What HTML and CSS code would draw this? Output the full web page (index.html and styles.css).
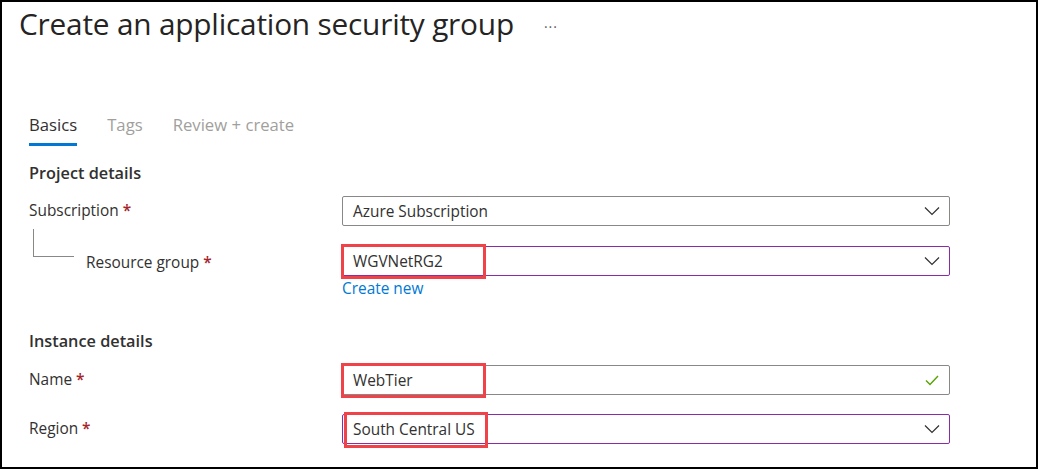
FILE: index.html
```html
<!DOCTYPE html>
<html>
<head>
<meta charset="utf-8">
<link rel="stylesheet" href="styles.css">
</head>
<body>
<div class="frame">
  <div class="header">
    <h1 class="title">Create an application security group</h1>
    <span class="more">···</span>
  </div>
  <div class="tabs">
    <div class="tab active">Basics</div>
    <div class="tab">Tags</div>
    <div class="tab">Review + create</div>
  </div>
  <div class="section-title">Project details</div>
  <div class="row row-sub">
    <div class="label">Subscription <span class="req">*</span></div>
    <div class="control">
      <div class="select">
        <span class="value">Azure Subscription</span>
        <svg class="chev" width="16" height="10" viewBox="0 0 16 10"><path d="M1 1.5 L8 8.5 L15 1.5" fill="none" stroke="#323130" stroke-width="1.2"/></svg>
      </div>
    </div>
  </div>
  <div class="row row-rg">
    <div class="label indent"><span class="tree"></span>Resource group <span class="req">*</span></div>
    <div class="control">
      <div class="select focus">
        <span class="value">WGVNetRG2</span>
        <svg class="chev" width="16" height="10" viewBox="0 0 16 10"><path d="M1 1.5 L8 8.5 L15 1.5" fill="none" stroke="#323130" stroke-width="1.2"/></svg>
        <span class="hl hl-rg"></span>
      </div>
      <a class="link">Create new</a>
    </div>
  </div>
  <div class="section-title second">Instance details</div>
  <div class="row row-name">
    <div class="label">Name <span class="req">*</span></div>
    <div class="control">
      <div class="select">
        <span class="value">WebTier</span>
        <svg class="check" width="14" height="11" viewBox="0 0 14 11"><path d="M1 5.5 L5 9.5 L13 1" fill="none" stroke="#57a300" stroke-width="1.4"/></svg>
        <span class="hl hl-name"></span>
      </div>
    </div>
  </div>
  <div class="row row-region">
    <div class="label">Region <span class="req">*</span></div>
    <div class="control">
      <div class="select focus">
        <span class="value">South Central US</span>
        <svg class="chev" width="16" height="10" viewBox="0 0 16 10"><path d="M1 1.5 L8 8.5 L15 1.5" fill="none" stroke="#323130" stroke-width="1.2"/></svg>
        <span class="hl hl-region"></span>
      </div>
    </div>
  </div>
</div>
</body>
</html>
```
FILE: styles.css
```css
html, body {
  margin: 0;
  padding: 0;
  background: #fff;
}
body {
  font-family: "Open Sans", "Noto Sans", sans-serif;
  color: #323130;
}
.frame {
  box-sizing: border-box;
  width: 1038px;
  height: 469px;
  border: 2px solid #000;
  padding: 0 0 0 27px;
}
.header {
  display: flex;
  align-items: center;
  margin-left: -10px;
  height: 42px;
}
.title {
  margin: 0;
  font-size: 29.8px;
  font-weight: 400;
  letter-spacing: -0.2px;
  color: #252423;
}
.more {
  margin-left: 30px;
  margin-top: 6px;
  font-size: 14px;
  color: #605e5c;
  letter-spacing: 1px;
}
.tabs {
  display: flex;
  gap: 30px;
  margin-top: 69px;
}
.tab {
  font-size: 16.7px;
  color: #a19f9d;
  padding-bottom: 7px;
  border-bottom: 3px solid transparent;
}
.tab.active {
  color: #323130;
  border-bottom-color: #0078d4;
}
.section-title {
  font-size: 16.3px;
  font-weight: 600;
  margin-top: 16px;
  color: #323130;
}
.section-title.second {
  margin-top: 31px;
}
.row {
  display: grid;
  grid-template-columns: 313px 608px;
  align-items: start;
}
.row-sub { margin-top: 12px; }
.row-rg { margin-top: 20px; }
.row-name { margin-top: 13px; }
.row-region { margin-top: 19px; }
.label {
  font-size: 15.4px;
  line-height: 30px;
  color: #323130;
}
.req {
  color: #a4262c;
  font-weight: 600;
}
.label.indent {
  position: relative;
  padding-left: 57px;
  top: 2px;
}
.tree {
  position: absolute;
  left: 4px;
  top: -19px;
  width: 40px;
  height: 27px;
  border-left: 1px solid #8a8886;
  border-bottom: 1px solid #8a8886;
}
.select {
  position: relative;
  box-sizing: border-box;
  height: 30px;
  border: 1px solid #8a8886;
  border-radius: 2px;
  display: flex;
  align-items: center;
  justify-content: space-between;
  padding: 0 9px 0 10px;
}
.select.focus {
  border-color: #8a2da5;
}
.value {
  font-size: 15.4px;
  color: #323130;
}
.chev { display: block; }
.check { display: block; margin-right: 1px; }
.link {
  display: block;
  margin-top: 2px;
  font-size: 15.4px;
  color: #0078d4;
}
.hl {
  position: absolute;
  border: 3px solid #ef4349;
  box-sizing: border-box;
  height: 35px;
  top: -3px;
}
.hl-rg { left: -2px; width: 145px; }
.hl-name { left: -2px; width: 145px; }
.hl-region { left: 1px; width: 144px; top: -3px; height: 36px; }
```
